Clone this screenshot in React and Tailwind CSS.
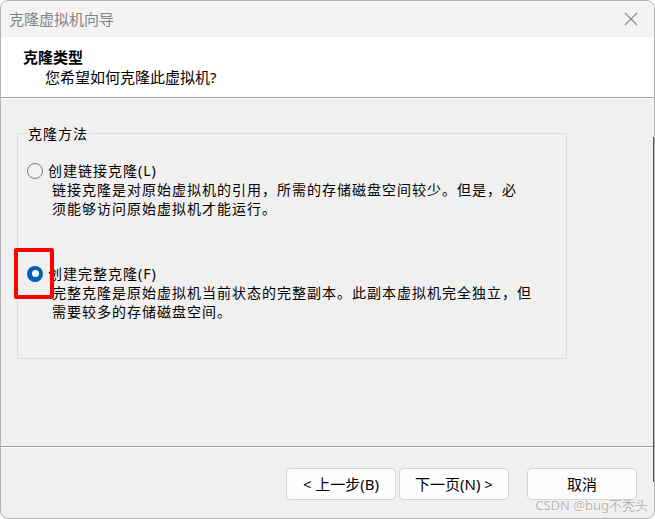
import React from "react";

const font = "font-['Noto_Sans','Noto_Sans_CJK_SC',sans-serif]";

const Radio = ({ checked }) =>
  checked ? (
    <span className="w-[16px] h-[16px] rounded-full bg-[#005fb8] flex items-center justify-center shrink-0">
      <span className="w-[7px] h-[7px] rounded-full bg-white" />
    </span>
  ) : (
    <span className="w-[16px] h-[16px] rounded-full border border-[#7a7a7a] bg-[#f3f3f3] shrink-0" />
  );

const Option = ({ label, lines, checked, className = "" }) => (
  <div className={className}>
    <div className="flex items-center h-[19px]">
      <Radio checked={checked} />
      <span className="ml-[5px] text-[14px] tracking-[1px] leading-[19px] text-black">{label}</span>
    </div>
    <div className="pl-[25px] text-[14px] tracking-[1px] leading-[19px] text-black">
      {lines.map((l, i) => (
        <div key={i}>{l}</div>
      ))}
    </div>
  </div>
);

export default function App() {
  return (
    <div className={`relative w-[655px] h-[519px] flex flex-col bg-[#f0f0f0] border border-[#b4b4b4] rounded-[8px] overflow-hidden ${font}`}>
      {/* title bar */}
      <div className="h-[36px] bg-[#f3f3f3] flex items-center justify-between pl-[8px] pr-[16px] shrink-0">
        <span className="text-[15px] text-[#838383]">克隆虚拟机向导</span>
        <svg width="14" height="14" viewBox="0 0 14 14">
          <path d="M1 1 L13 13 M13 1 L1 13" stroke="#8a8a8a" strokeWidth="1.1" />
        </svg>
      </div>

      {/* header */}
      <div className="h-[61px] bg-white border-b border-[#a0a0a0] pt-[10px] pl-[22px] shrink-0">
        <div className="text-[15px] font-bold leading-[20px] text-black">克隆类型</div>
        <div className="pl-[22px] text-[15px] leading-[20px] text-black">您希望如何克隆此虚拟机?</div>
      </div>
      <div className="h-[1px] bg-white shrink-0" />

      {/* body */}
      <div className="flex-1">
        <div className="relative mt-[34px] ml-[16px] w-[550px] h-[226px] border border-[#dcdcdc] pt-[27px] pl-[9px]">
          <span className="absolute -top-[10px] left-[9px] px-[1px] bg-[#f0f0f0] text-[14px] tracking-[1px] leading-[20px] text-black">
            克隆方法
          </span>
          <Option
            label="创建链接克隆(L)"
            lines={["链接克隆是对原始虚拟机的引用，所需的存储磁盘空间较少。但是，必", "须能够访问原始虚拟机才能运行。"]}
          />
          <Option
            checked
            className="mt-[46px]"
            label="创建完整克隆(F)"
            lines={["完整克隆是原始虚拟机当前状态的完整副本。此副本虚拟机完全独立，但", "需要较多的存储磁盘空间。"]}
          />
        </div>
      </div>

      {/* footer */}
      <div className="border-t border-[#a0a0a0] shrink-0">
        <div className="h-[1px] bg-white" />
        <div className="h-[70px] flex justify-end pt-[20px] pr-[17px]">
          <button className="w-[110px] h-[32px] bg-[#fdfdfd] border border-[#d4d4d4] rounded-[4px] text-[15px] text-black">
            &lt; 上一步(B)
          </button>
          <button className="ml-[3px] w-[110px] h-[32px] bg-[#fdfdfd] border border-[#d4d4d4] rounded-[4px] text-[15px] text-black">
            下一页(N) &gt;
          </button>
          <button className="ml-[18px] w-[110px] h-[32px] bg-[#fdfdfd] border border-[#d4d4d4] rounded-[4px] text-[15px] text-black">
            取消
          </button>
        </div>
      </div>

      {/* annotation box */}
      <div className="absolute left-[13px] top-[247px] w-[40px] h-[51px] border-[4px] border-[#ff0000] rounded-[2px]" />

      {/* window edge behind */}
      <div className="absolute right-0 top-[136px] w-[1px] h-[345px] bg-[#505050]" />

      {/* watermark */}
      <span className="absolute right-[6px] bottom-[6px] text-[13px] leading-[14px] text-[#b8b8b8] [text-shadow:0_0_2px_#ffffff]">
        CSDN @bug不秃头
      </span>
    </div>
  );
}
